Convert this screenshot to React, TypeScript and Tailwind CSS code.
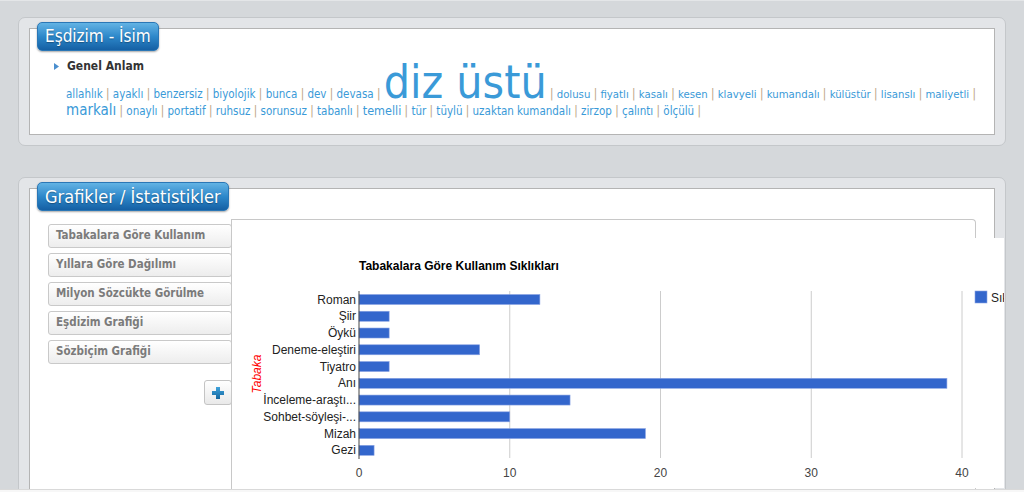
import React, { Fragment } from 'react';

type Word = [string, string];

const line1: Word[] = [
  ['allahlık', 'text-[11.5px]'],
  ['ayaklı', 'text-[11.5px]'],
  ['benzersiz', 'text-[11.5px]'],
  ['biyolojik', 'text-[11.5px]'],
  ['bunca', 'text-[11.5px]'],
  ['dev', 'text-[11.5px]'],
  ['devasa', 'text-[11.5px]'],
  ['diz üstü', 'text-[46px]'],
  ['dolusu', 'text-[11.3px]'],
  ['fiyatlı', 'text-[11.3px]'],
  ['kasalı', 'text-[11.3px]'],
  ['kesen', 'text-[11.3px]'],
  ['klavyeli', 'text-[11.3px]'],
  ['kumandalı', 'text-[11.3px]'],
  ['külüstür', 'text-[11.3px]'],
  ['lisanslı', 'text-[11.3px]'],
  ['maliyetli', 'text-[11.3px]'],
];

const line2: Word[] = [
  ['markalı', 'text-[15px]'],
  ['onaylı', 'text-[11.5px]'],
  ['portatif', 'text-[11.5px]'],
  ['ruhsuz', 'text-[11.5px]'],
  ['sorunsuz', 'text-[11.5px]'],
  ['tabanlı', 'text-[11.5px]'],
  ['temelli', 'text-[12.5px]'],
  ['tür', 'text-[11.5px]'],
  ['tüylü', 'text-[11.5px]'],
  ['uzaktan kumandalı', 'text-[11.5px]'],
  ['zirzop', 'text-[11.5px]'],
  ['çalıntı', 'text-[11.5px]'],
  ['ölçülü', 'text-[11.5px]'],
];

const graphButtons = [
  'Tabakalara Göre Kullanım',
  'Yıllara Göre Dağılımı',
  'Milyon Sözcükte Görülme',
  'Eşdizim Grafiği',
  'Sözbiçim Grafiği',
];

const rows: [string, number][] = [
  ['Roman', 12],
  ['Şiir', 2],
  ['Öykü', 2],
  ['Deneme-eleştiri', 8],
  ['Tiyatro', 2],
  ['Anı', 39],
  ['İnceleme-araştı...', 14],
  ['Sohbet-söyleşi-...', 10],
  ['Mizah', 19],
  ['Gezi', 1],
];

function Tab({ title, size }: { title: string; size: string }) {
  return (
    <div
      className={`-mt-[7px] ml-[7px] flex h-[29px] w-fit items-center rounded-[5px] border border-[#2b77b6] bg-gradient-to-b from-[#62b3e4] via-[#2d88ca] to-[#1560a4] px-[7px] text-white shadow-[0_1px_2px_rgba(0,0,0,0.35)] [text-shadow:0_1px_1px_rgba(0,0,0,0.3)] ${size}`}
    >
      {title}
    </div>
  );
}

function WordLine({ words }: { words: Word[] }) {
  return (
    <>
      {words.map(([w, size]) => (
        <Fragment key={w}>
          <span className={size}>{w}</span>
          <span className="text-[11.5px] text-[#bca382]">{' | '}</span>
        </Fragment>
      ))}
    </>
  );
}

function Chart() {
  const x = (v: number) => 127 + v * 15.075;
  return (
    <svg width="772" height="250" className="mt-[18px] block" fontFamily="'Liberation Sans', Arial, sans-serif">
      <rect x="0" y="0" width="772" height="250" fill="#ffffff" />
      <text x="127" y="32" fontSize="12" fontWeight="bold" fill="#000">
        Tabakalara Göre Kullanım Sıklıkları
      </text>
      {[10, 20, 30, 40].map((v) => (
        <line key={v} x1={x(v)} x2={x(v)} y1="53" y2="220" stroke="#cccccc" strokeWidth="1" />
      ))}
      {rows.map(([label, v], i) => {
        const cy = 61.5 + 16.76 * i;
        return (
          <g key={label}>
            <rect x="127" y={cy - 5} width={v * 15.075} height="10" fill="#3366cc" stroke="#8aa3e3" strokeWidth="0.6" />
            <text x="124" y={cy + 4} fontSize="12" fill="#222" textAnchor="end">
              {label}
            </text>
          </g>
        );
      })}
      <line x1="127" x2="127" y1="53" y2="221" stroke="#444" strokeWidth="1" />
      {[0, 10, 20, 30, 40].map((v) => (
        <text key={v} x={x(v)} y="239" fontSize="12" fill="#444" textAnchor="middle">
          {v}
        </text>
      ))}
      <text
        x="29"
        y="136"
        fontSize="12"
        fontStyle="italic"
        fill="#ff0000"
        textAnchor="middle"
        transform="rotate(-90 29 136)"
      >
        Tabaka
      </text>
      <rect x="743" y="53" width="12" height="12" fill="#3366cc" stroke="#8aa3e3" strokeWidth="0.6" />
      <text x="759" y="64" fontSize="12" fill="#222">
        Sıklık
      </text>
    </svg>
  );
}

export default function App() {
  return (
    <div className="flex h-[492px] w-[1024px] flex-col overflow-hidden border-t border-[#e4e6e8] bg-[#d5d8db] font-['DejaVu_Sans_Condensed','Liberation_Sans',sans-serif]">
      <div className="min-h-0 flex-1 overflow-hidden px-[18px] pt-[16px]">
        {/* Eşdizim panel */}
        <div className="rounded-[7px] border border-[#c4c7ca] bg-[#e3e5e8] p-[10px]">
          <div className="h-[107px] border border-[#b4b4b4] bg-white">
            <Tab title="Eşdizim - İsim" size="text-[17px]" />
            <div className="mt-[7px] flex items-center pl-[24px] text-[12px] font-bold leading-[16px] text-[#333]">
              <svg width="5" height="7" viewBox="0 0 5 7" className="mr-[8px]">
                <polygon points="0,0 5,3.5 0,7" fill="#4b8fce" />
              </svg>
              Genel Anlam
            </div>
            <div className="mt-[1px] pl-[36px] leading-[15px] text-[#3a9ad8]">
              <WordLine words={line1} />
              <br />
              <WordLine words={line2} />
            </div>
          </div>
        </div>

        {/* Grafikler panel */}
        <div className="mt-[31px] h-[400px] rounded-[7px] border border-[#c4c7ca] bg-[#e3e5e8] p-[10px]">
          <div className="h-[380px] border border-[#b4b4b4] bg-white">
            <Tab title="Grafikler / İstatistikler" size="text-[18px]" />
            <div className="flex items-start pl-[18px]">
              <div className="mt-[13px] flex w-[184px] shrink-0 flex-col gap-[5px]">
                {graphButtons.map((b) => (
                  <div
                    key={b}
                    className="flex h-[24px] items-center rounded-[3px] border border-[#c9c9c9] bg-gradient-to-b from-white to-[#ededed] pl-[7px] text-[11.5px] font-bold text-[#7b7b7b]"
                  >
                    {b}
                  </div>
                ))}
                <div className="mt-[11px] flex h-[25px] w-[28px] items-center justify-center self-end rounded-[3px] border border-[#c4c4c4] bg-gradient-to-b from-white to-[#e9e9e9]">
                  <svg width="12" height="12" viewBox="0 0 12 12">
                    <defs>
                      <linearGradient id="pl" x1="0" y1="0" x2="0" y2="1">
                        <stop offset="0" stopColor="#3fa3dc" />
                        <stop offset="1" stopColor="#15679f" />
                      </linearGradient>
                    </defs>
                    <path d="M4 0h4v4h4v4H8v4H4V8H0V4h4z" fill="url(#pl)" />
                  </svg>
                </div>
              </div>
              <div className="relative -ml-[1px] mt-[8px] h-[300px] w-[745px] shrink-0 rounded-tr-[4px] border-l border-r border-t border-[#c8c8c8] bg-white">
                <Chart />
              </div>
            </div>
          </div>
        </div>
      </div>
      <div className="h-[3px] shrink-0 border-t border-[#d9d9d9] bg-[#f7f7f7]" />
    </div>
  );
}
